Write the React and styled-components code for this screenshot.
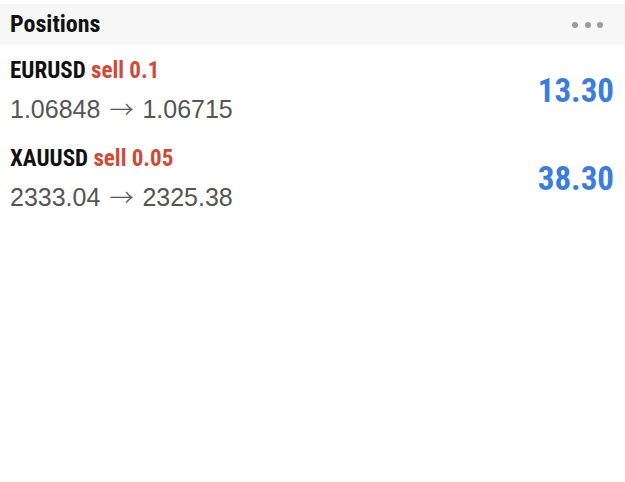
import React from "react";
import styled, { createGlobalStyle } from "styled-components";

const GlobalStyle = createGlobalStyle`
  html, body { margin: 0; padding: 0; background: #ffffff; }
  body { font-family: "Roboto Condensed", "Liberation Sans Narrow", sans-serif; }
`;

const Page = styled.div`
  padding-top: 4px;
  width: 625px;
  min-height: 478px;
  background: #ffffff;
`;

const Toolbar = styled.header`
  height: 41px;
  display: flex;
  align-items: center;
  justify-content: space-between;
  padding: 0 22px 0 10px;
  background: #f7f7f7;
`;

const Title = styled.h1`
  margin: 0;
  font-family: "Roboto Condensed", sans-serif;
  font-weight: 700;
  font-size: 24px;
  line-height: 41px;
  color: #111111;
`;

const Dots = styled.div`
  display: flex;
  gap: 6.5px;
`;

const Dot = styled.span`
  width: 6px;
  height: 6px;
  border-radius: 50%;
  background: #9b9b9b;
`;

const List = styled.div`
  display: flex;
  flex-direction: column;
`;

const Row = styled.div`
  display: flex;
  align-items: center;
  justify-content: space-between;
  padding: 12px 11px 9px 10px;
`;

const Info = styled.div`
  display: flex;
  flex-direction: column;
  gap: 8px;
`;

const Label = styled.div`
  font-family: "Roboto Condensed", sans-serif;
  font-weight: 700;
  font-size: 23px;
  line-height: 28px;
  color: #111111;
  white-space: nowrap;
`;

const Side = styled.span`
  color: ${(p) => (p.$side === "buy" ? "#3b7ddd" : "#cf4a39")};
`;

const Prices = styled.div`
  font-family: "Liberation Sans", Arial, sans-serif;
  font-size: 25px;
  line-height: 30px;
  color: #555555;
  white-space: nowrap;
`;

const Arrow = styled.span`
  font-family: "Noto Sans CJK SC", "DejaVu Sans", sans-serif;
  font-weight: 300;
  font-size: 24px;
  display: inline-block;
  margin: 0 9px 0 9px;
`;

const Profit = styled.div`
  font-family: "Roboto Condensed", sans-serif;
  font-weight: 700;
  font-size: 33px;
  line-height: 40px;
  color: ${(p) => (p.$value < 0 ? "#cf4a39" : "#3b7ddd")};
`;

const positions = [
  { symbol: "EURUSD", side: "sell", volume: "0.1", open: "1.06848", current: "1.06715", profit: "13.30" },
  { symbol: "XAUUSD", side: "sell", volume: "0.05", open: "2333.04", current: "2325.38", profit: "38.30" },
];

export default function App() {
  return (
    <>
      <GlobalStyle />
      <Page>
        <Toolbar>
          <Title>Positions</Title>
          <Dots>
            <Dot />
            <Dot />
            <Dot />
          </Dots>
        </Toolbar>
        <List>
          {positions.map((p) => (
            <Row key={p.symbol}>
              <Info>
                <Label>
                  {p.symbol} <Side $side={p.side}>{p.side} {p.volume}</Side>
                </Label>
                <Prices>
                  {p.open}
                  <Arrow>→</Arrow>
                  {p.current}
                </Prices>
              </Info>
              <Profit $value={parseFloat(p.profit)}>{p.profit}</Profit>
            </Row>
          ))}
        </List>
      </Page>
    </>
  );
}
